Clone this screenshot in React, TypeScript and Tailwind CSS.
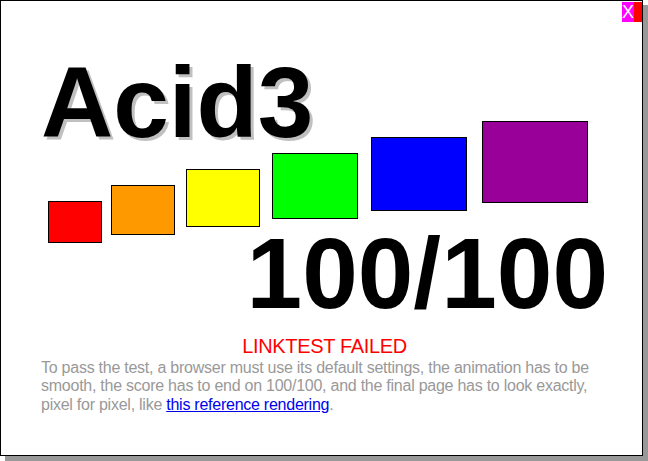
const buckets = [
  { color: "bg-[#ff0000]", size: "w-[54px] h-[42px]", offset: "ml-[7px] mt-[80px]" },
  { color: "bg-[#ff9900]", size: "w-[64px] h-[50px]", offset: "ml-[9px] mt-[64px]" },
  { color: "bg-[#ffff00]", size: "w-[74px] h-[58px]", offset: "ml-[11px] mt-[48px]" },
  { color: "bg-[#00ff00]", size: "w-[86px] h-[66px]", offset: "ml-[12px] mt-[32px]" },
  { color: "bg-[#0000ff]", size: "w-[96px] h-[74px]", offset: "ml-[13px] mt-[16px]" },
  { color: "bg-[#990099]", size: "w-[106px] h-[82px]", offset: "ml-[15px] mt-0" },
];

export default function App() {
  return (
    <div className="w-[648px] h-[461px] bg-white font-['Liberation_Sans',Arial,sans-serif]">
      <div className="relative w-[643px] h-[456px] border border-black bg-white shadow-[5px_5px_0_#999] pl-[40px] pr-[34px]">
        {/* close button */}
        <a className="absolute top-[1px] right-0 flex h-[20px] w-[20px] border-r-[8px] border-[#ff0000] bg-[#ff00ff] text-white text-[18px] leading-[20px] justify-center">
          X
        </a>

        <h1 className="mt-[51px] text-[100px] leading-[100px] font-bold text-black [text-shadow:3px_3px_0_#c0c0c0]">
          Acid3
        </h1>

        {/* buckets */}
        <div className="-mt-[31px] flex items-start h-[122px]">
          {buckets.map((b, i) => (
            <div key={i} className={`${b.color} ${b.size} ${b.offset} border border-black shrink-0`} />
          ))}
        </div>

        <div className="-mt-[20px] text-right text-[100px] leading-[100px] font-bold text-black">
          100/100
        </div>

        <div className="mt-[13px] text-center text-[20px] leading-[20px] tracking-[-0.33px] text-[#ff0000]">
          LINKTEST FAILED
        </div>

        <p className="mt-[3px] text-[16px] leading-[18.4px] tracking-[-0.25px] text-[#999] whitespace-nowrap">
          To pass the test, a browser must use its default settings, the animation has to be
          <br />
          smooth, the score has to end on 100/100, and the final page has to look exactly,
          <br />
          pixel for pixel, like{" "}
          <a className="text-[#0000ee] underline">this reference rendering</a>.
        </p>
      </div>
    </div>
  );
}
